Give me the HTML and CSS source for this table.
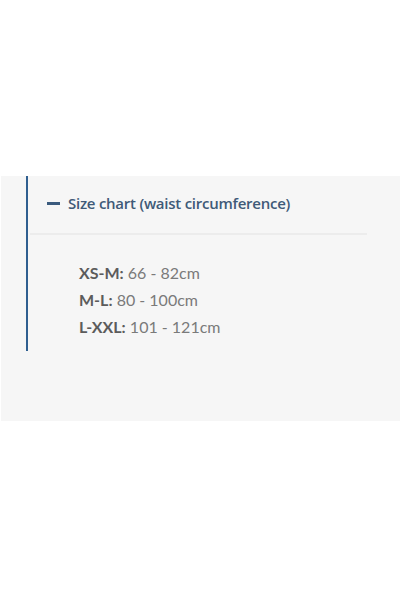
FILE: index.html
```html
<!DOCTYPE html>
<html>
<head>
<meta charset="utf-8">
<link rel="stylesheet" href="styles.css">
</head>
<body>
<div class="panel">
  <div class="item">
    <div class="head">
      <span class="minus"></span>
      <span class="title">Size chart (waist circumference)</span>
    </div>
    <div class="body">
      <div class="row"><b>XS-M:</b> 66 - 82cm</div>
      <div class="row"><b>M-L:</b> 80 - 100cm</div>
      <div class="row"><b>L-XXL:</b> 101 - 121cm</div>
    </div>
  </div>
</div>
</body>
</html>
```
FILE: styles.css
```css
html, body { margin: 0; padding: 0; background: #fff; }
.panel {
  margin-top: 176px;
  margin-left: 1px;
  height: 245px;
  background: #f6f6f6;
}
.item {
  margin-left: 25px;
  width: 341px;
  border-left: 2px solid #2f5f90;
  height: 175px;
  box-sizing: border-box;
}
.head {
  display: flex;
  align-items: center;
  height: 59px;
  padding-left: 17px;
  padding-bottom: 3px;
  border-bottom: 2px solid #ececec;
  box-sizing: border-box;
  margin-left: 2px;
}
.minus {
  width: 13px;
  height: 3px;
  background: #3b5b7e;
  margin-right: 8px;
}
.title {
  font-family: "Open Sans", "Noto Sans", sans-serif;
  font-weight: 600;
  font-size: 15px;
  letter-spacing: -0.25px;
  color: #3f5a78;
}
.body {
  padding-top: 24px;
  padding-left: 51px;
}
.row {
  font-family: "Lato", "Liberation Sans", sans-serif;
  font-size: 16px;
  line-height: 27px;
  color: #7a7a7a;
}
.row b { color: #5c5c5c; font-weight: 700; }
```
